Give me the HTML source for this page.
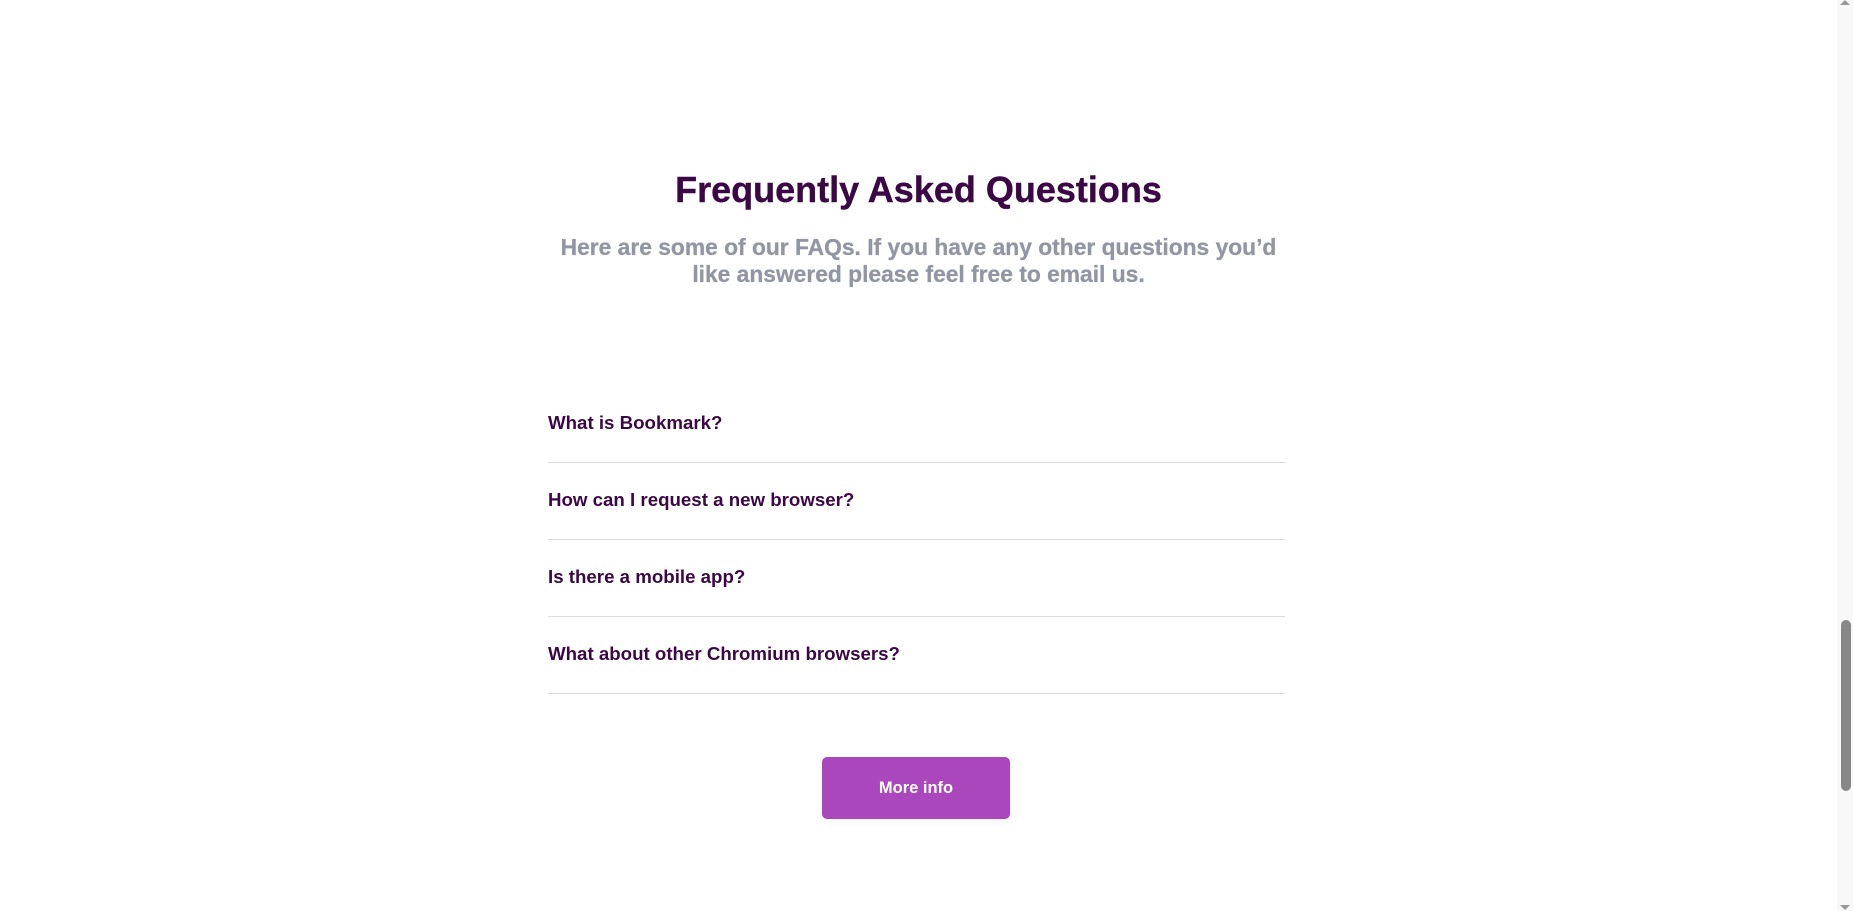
<!DOCTYPE html>
<html><head><meta charset="utf-8"><style>
html,body{margin:0;padding:0;width:1853px;height:911px;overflow:hidden;background:#fff;font-family:"Liberation Sans",Arial,sans-serif;}
h1{position:absolute;left:0;width:1837px;top:166px;margin:0;text-align:center;font-size:36px;line-height:48px;color:#3b0745;font-weight:bold;-webkit-text-stroke:0.4px #3b0745;}
.sub{position:absolute;left:548px;width:741px;top:234px;margin:0;text-align:center;font-size:22.8px;line-height:27px;color:#9296a4;font-weight:bold;-webkit-text-stroke:0.3px #9296a4;}
.q{position:absolute;left:548px;width:737px;height:76px;border-bottom:1px solid #dcdcdf;font-size:18.7px;font-weight:bold;color:#3b0745;}
.q span{position:absolute;left:0;}
.btn{position:absolute;left:822px;top:757px;width:188px;height:62px;background:#ab47bc;border-radius:5px;color:#fff;font-weight:bold;font-size:16.5px;line-height:62px;text-align:center;box-shadow:0 4px 8px rgba(0,0,0,0.04);}
.sb{position:absolute;left:1837px;top:0;width:16px;height:911px;background:#f8f8f8;}
.th{position:absolute;left:1841px;top:620px;width:10px;height:171px;background:#878787;border-radius:5px;}
</style></head><body>
<h1>Frequently Asked Questions</h1>
<p class="sub">Here are some of our FAQs. If you have any other questions you’d<br>like answered please feel free to email us.</p>
<div class="q" style="top:386px"><span style="top:26px">What is Bookmark?</span></div>
<div class="q" style="top:463px"><span style="top:26px">How can I request a new browser?</span></div>
<div class="q" style="top:540px"><span style="top:26px">Is there a mobile app?</span></div>
<div class="q" style="top:617px"><span style="top:26px">What about other Chromium browsers?</span></div>
<div class="btn">More info</div>
<div class="sb"></div><div class="th"></div>
<div style="position:absolute;left:1840px;top:0;width:0;height:0;border-left:5px solid transparent;border-right:5px solid transparent;border-bottom:5px solid #999;"></div>
<div style="position:absolute;left:1840px;top:905px;width:0;height:0;border-left:5px solid transparent;border-right:5px solid transparent;border-top:5px solid #999;"></div>
</body></html>
